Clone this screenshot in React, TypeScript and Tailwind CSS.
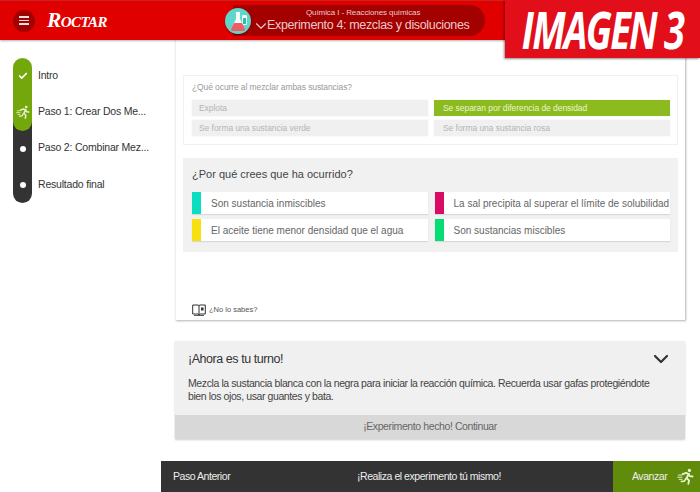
import { Check, ChevronDown } from "lucide-react";

const font = { fontFamily: '"Liberation Sans", Arial, sans-serif' };

function Runner({ className }: { className?: string }) {
  return (
    <svg viewBox="0 0 24 24" className={className} fill="none" stroke="currentColor" strokeLinecap="round" strokeLinejoin="round">
      <circle cx="17.5" cy="3.5" r="2.3" fill="currentColor" stroke="none" />
      <path strokeWidth="2.6" d="M8 8.5l5-1.5 3.5 1.5-3 6 3.5 3-1 5" />
      <path strokeWidth="2.6" d="M16.5 8.5l1.5 3 4 .5" />
      <path strokeWidth="2.2" d="M12.5 15l-2 3.5-4.5.5" />
      <path strokeWidth="1.3" d="M2 10h5M1 13h6M3 16h4" />
    </svg>
  );
}

function Flask() {
  return (
    <svg viewBox="0 0 26 26" className="h-[26px] w-[26px]">
      <circle cx="13" cy="13" r="13" fill="#5ed6ca" />
      <rect x="17" y="7" width="5" height="10" rx="1" fill="#e8fbf8" />
      <rect x="18" y="10" width="3" height="6" fill="#35b7aa" />
      <path d="M11 4h4v7l5 10a1.5 1.5 0 0 1-1.4 2H7.400a1.500 1.500 0 0 1-1.400-2l5-10z" fill="#f2fbfa" />
      <path d="M9 15h8l3 6a1.500 1.500 0 0 1-1.400 2H7.400a1.500 1.500 0 0 1-1.400-2z" fill="#ee5c64" />
    </svg>
  );
}

function BookIcon() {
  return (
    <svg viewBox="0 0 14 12" className="h-3 w-[14px]" fill="none" stroke="#333" strokeWidth="1">
      <path d="M.7 1h5.300l1 .6 1-.6h5.300v9H8l-1 .8-1-.8H.7z" />
      <path d="M7 1.600v9" />
      <rect x="9" y="3.500" width="2.500" height="3" fill="#333" stroke="none" />
      <path d="M2 11.500h10" strokeWidth=".8" />
    </svg>
  );
}

const steps = [
  { label: "Intro", done: true },
  { label: "Paso 1: Crear Dos Me...", current: true },
  { label: "Paso 2: Combinar Mez..." },
  { label: "Resultado final" },
];

function Stepper() {
  return (
    <div className="ml-[13px] mt-[18px] flex flex-col">
      {steps.map((s, i) => (
        <div key={s.label} className="flex h-[36.25px] items-center">
          <div
            className={
              "h-full w-[19px] " +
              (i === 0 ? "rounded-t-full bg-[#73a70c] " : "bg-[#333333] ") +
              (i === 3 ? "rounded-b-full " : "")
            }
          >
            <div
              className={
                "flex h-full w-full items-center justify-center " +
                (s.current ? "rounded-b-full bg-[#73a70c]" : "")
              }
            >
              {s.done && <Check className="h-[10px] w-[10px] text-white" strokeWidth={4} />}
              {s.current && <Runner className="h-[14px] w-[14px] text-[#e9f3d2]" />}
              {!s.done && !s.current && <div className="h-[6px] w-[6px] rounded-full bg-white" />}
            </div>
          </div>
          <span className="ml-[6px] -mt-[1px] text-[10.5px] tracking-[-0.2px] text-[#333]">{s.label}</span>
        </div>
      ))}
    </div>
  );
}

function Choice({ label, active, right }: { label: string; active?: boolean; right?: boolean }) {
  return (
    <div
      className={
        "flex h-[16px] items-center text-[8.5px] tracking-[-0.05px] shadow-[0_0_1px_rgba(0,0,0,0.12)] " +
        (right ? "pl-[9px] " : "pl-[7px] ") +
        (active ? "bg-[#8cbb1f] text-[#e9f3cf]" : "bg-[#f0f0f0] text-[#b5b5b5]")
      }
    >
      {label}
    </div>
  );
}

function Answer({ label, color }: { label: string; color: string }) {
  return (
    <div className="flex h-[22px] items-center bg-white shadow-[0_1px_1px_rgba(0,0,0,0.1)]">
      <div className={"h-full w-[9px] shrink-0 " + color} />
      <span className="ml-[10px] whitespace-nowrap text-[10px] text-[#666]">{label}</span>
    </div>
  );
}

export default function App() {
  return (
    <div className="relative flex h-[492px] w-[700px] flex-col overflow-hidden bg-white" style={font}>
      {/* Top bar */}
      <header className="z-10 flex h-[40px] shrink-0 items-center border-t border-[#c22] bg-[#e10000] shadow-[0_1px_2px_rgba(0,0,0,0.3)]">
        <div className="ml-[13px] flex h-[22px] w-[22px] flex-col items-center justify-center gap-[2px] rounded-full bg-[#a10000]">
          <span className="h-[1.5px] w-[10px] bg-[#f6dede]" />
          <span className="h-[1.5px] w-[10px] bg-[#f6dede]" />
          <span className="h-[1.5px] w-[10px] bg-[#f6dede]" />
        </div>
        <span
          className="ml-[12px] w-[178px] text-[21.5px] font-bold italic leading-none tracking-[-0.6px] text-white"
          style={{ fontFamily: '"Liberation Serif", serif', fontVariant: "small-caps" }}
        >
          Roctar
        </span>
        <div className="relative z-10 rounded-full shadow-[0_1px_2px_rgba(0,0,0,0.35)]">
          <Flask />
        </div>
        <div className="-ml-[18px] flex h-[31px] w-[252px] flex-col items-start justify-center rounded-r-full bg-[#a30000] pl-[19px] text-[#eccaca]">
          <span className="ml-[54px] whitespace-nowrap text-[8px] leading-[10px] tracking-[-0.1px]">Química I - Reacciones químicas</span>
          <div className="flex items-center leading-[15px]">
            <ChevronDown className="-my-[2px] h-[18px] w-[18px]" strokeWidth={1.5} />
            <span className="-ml-[3px] whitespace-nowrap text-[12.5px] tracking-[-0.35px]">Experimento 4: mezclas y disoluciones</span>
          </div>
        </div>
      </header>

      <div className="flex min-h-0 flex-1">
        {/* Side steps */}
        <aside className="w-[161px] shrink-0">
          <Stepper />
        </aside>

        <main className="flex min-w-0 flex-1 flex-col">
          <div className="ml-[14px] mr-[15px] flex flex-col">
            {/* Activity card */}
            <section className="flex h-[280px] flex-col border-l border-[#eee] bg-white pl-[7px] pr-[7px] pt-[35px] shadow-[1px_1px_2px_rgba(0,0,0,0.3)]">
              <div className="h-[70px] border border-[#f0f0f0] pl-[8px] pr-[7px] pt-[6px]">
                <p className="text-[8.5px] leading-[11px] tracking-[-0.1px] text-[#999]">¿Qué ocurre al mezclar ambas sustancias?</p>
                <div className="mt-[7px] grid grid-cols-2 gap-x-[6px] gap-y-[4px]">
                  <Choice label="Explota" />
                  <Choice label="Se separan por diferencia de densidad" active right />
                  <Choice label="Se forma una sustancia verde" />
                  <Choice label="Se forma una sustancia rosa" right />
                </div>
              </div>

              <div className="mt-[13px] h-[94px] bg-[#f1f1f1] pl-[9px] pr-[8px] pt-[9px]">
                <h3 className="text-[11px] leading-[15px] text-[#444]">¿Por qué crees que ha ocurrido?</h3>
                <div className="mt-[10px] grid grid-cols-2 gap-x-[7px] gap-y-[5px]">
                  <Answer label="Son sustancia inmiscibles" color="bg-[#0bddc0]" />
                  <Answer label="La sal precipita al superar el límite de solubilidad" color="bg-[#d90b63]" />
                  <Answer label="El aceite tiene menor densidad que el agua" color="bg-[#f8e010]" />
                  <Answer label="Son sustancias miscibles" color="bg-[#06dd75]" />
                </div>
              </div>

              <div className="mt-[50px] flex items-center pl-[9px] pt-[2px]">
                <BookIcon />
                <span className="ml-[3px] text-[7.5px] text-[#555]">¿No lo sabes?</span>
              </div>
            </section>

            {/* Turn card */}
            <section className="mt-[21px] bg-[#f0f0f0] shadow-[0_1px_2px_rgba(0,0,0,0.2)]">
              <div className="flex items-center justify-between pl-[13px] pr-[12px] pt-[10px]">
                <h3 className="text-[12.5px] leading-[16px] tracking-[-0.45px] text-[#333]">¡Ahora es tu turno!</h3>
                <ChevronDown className="-my-[4px] h-[24px] w-[24px] text-[#333]" strokeWidth={2.2} />
              </div>
              <p className="mt-[10px] h-[38px] pl-[13px] pr-[30px] text-[10.5px] leading-[13px] tracking-[-0.4px] text-[#444]">
                Mezcla la sustancia blanca con la negra para iniciar la reacción química. Recuerda usar gafas protegiéndote bien los ojos, usar guantes y bata.
              </p>
              <div className="flex h-[24px] items-center justify-center bg-[#d8d8d8] text-[10.5px] tracking-[-0.4px] text-[#666]">
                ¡Experimento hecho! Continuar
              </div>
            </section>
          </div>

          {/* Footer */}
          <footer className="mt-auto flex h-[31px] items-center bg-[#333333] text-[10.5px] tracking-[-0.45px] text-[#eee]">
            <span className="ml-[12px] w-[184px]">Paso Anterior</span>
            <span className="w-[256px]">¡Realiza el experimento tú mismo!</span>
            <div className="flex h-full flex-1 items-center bg-[#618c0b] pl-[19px]">
              <span>Avanzar</span>
              <Runner className="ml-[10px] h-[17px] w-[17px] text-[#e9f3d2]" />
            </div>
          </footer>
        </main>
      </div>

      {/* Label stuck on the corner */}
      <div className="absolute right-0 top-0 z-20 flex h-[58px] w-[195px] items-center justify-center bg-[#e20e1a] shadow-[-1px_1px_2px_rgba(0,0,0,0.45)]">
        <span
          className="origin-center scale-y-[1.36] whitespace-nowrap text-[38px] font-bold italic leading-none tracking-[-1.8px] text-white"
          style={{ fontFamily: '"Open Sans", sans-serif' }}
        >
          IMAGEN 3
        </span>
      </div>
    </div>
  );
}
